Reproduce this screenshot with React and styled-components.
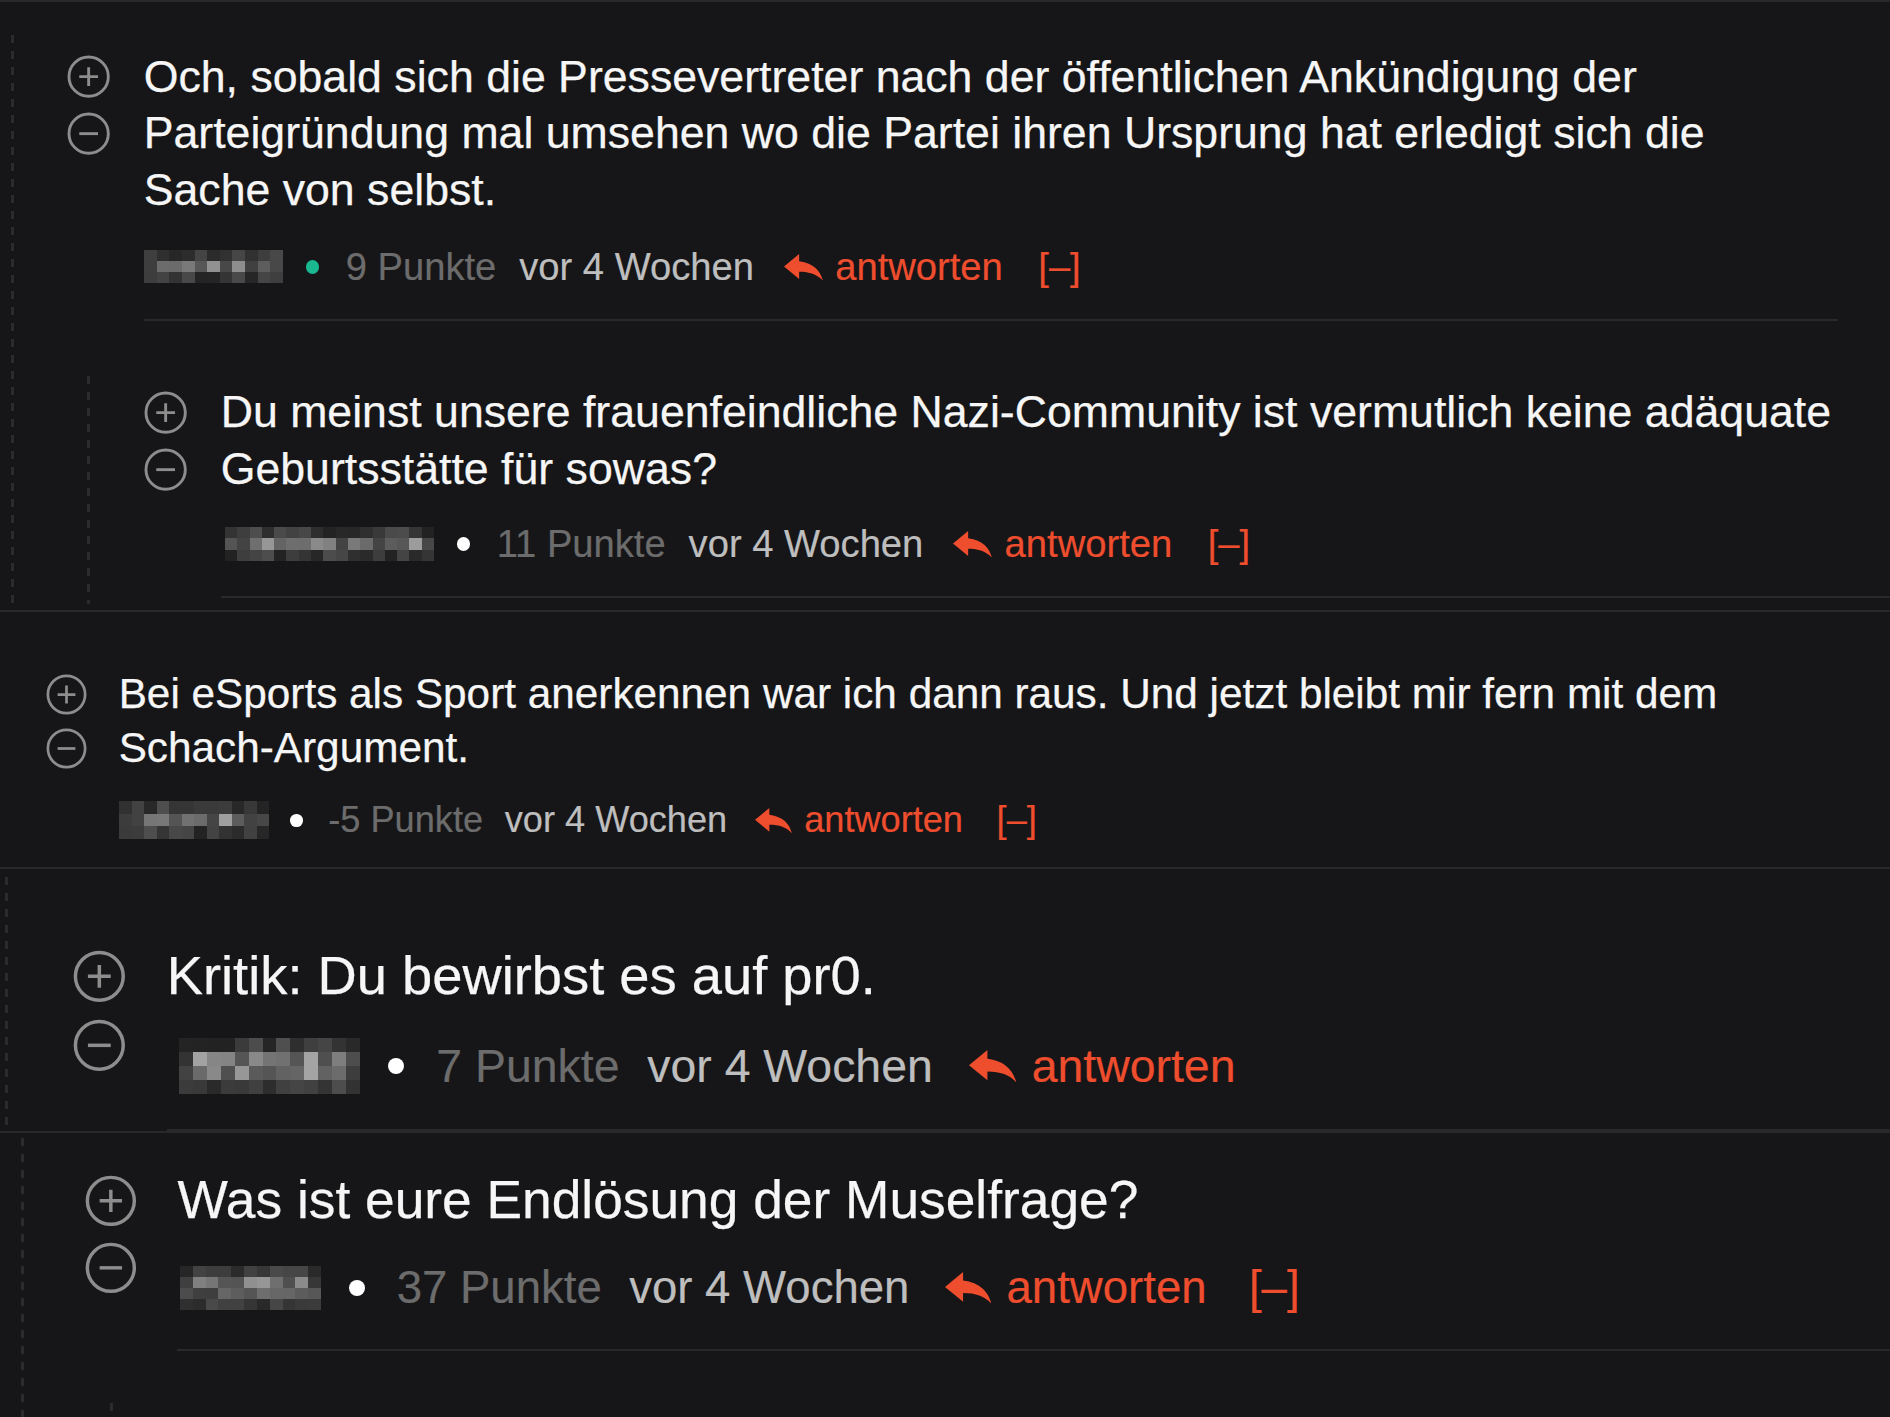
import React from "react";
import styled, { createGlobalStyle } from "styled-components";

const Global = createGlobalStyle`
  html, body { margin: 0; padding: 0; background: #161618; }
  body {
    width: 1890px;
    height: 1417px;
    overflow: hidden;
    font-family: "Liberation Sans", Arial, Helvetica, sans-serif;
    -webkit-font-smoothing: antialiased;
  }
  #root { width: 1890px; height: 1417px; }
`;

const Page = styled.div`
  width: 1890px;
  height: 1417px;
  overflow: hidden;
  background: #161618;
  display: flex;
  flex-direction: column;
`;

const Section = styled.section`
  flex: none;
  font-size: ${(p) => p.$size}px;
  padding-left: ${(p) => p.$pl}px;
  border-top: ${(p) => (p.$top ? "2px solid #29292c" : "none")};
  border-bottom: ${(p) => (p.$bottom ? "2px solid #29292c" : "none")};
`;

const dash = `
  background-image: repeating-linear-gradient(to bottom, #2b2b2e 0 8px, transparent 8px 16px);
  background-size: 3px 100%;
  background-repeat: no-repeat;
  background-position: left top;
`;

const Thread = styled.div`
  margin-top: ${(p) => p.$mt}px;
  margin-left: ${(p) => p.$ml || 0}px;
  padding-top: ${(p) => p.$pt}px;
  padding-bottom: ${(p) => p.$pb || 0}px;
  padding-left: ${(p) => p.$pl}px;
  min-height: ${(p) => (p.$minH ? p.$minH + "px" : "0")};
  ${(p) => (p.$dashed ? dash : "")}
`;

const CommentRow = styled.div`
  display: flex;
  align-items: flex-start;
  gap: 0.76em;
`;

const Votes = styled.div`
  flex: none;
  width: 0.97em;
  display: flex;
  flex-direction: column;
`;

const VoteCell = styled.div`
  height: 1.275em;
  display: flex;
  align-items: center;
  justify-content: center;
`;

const VoteIcon = styled.svg`
  width: 0.97em;
  height: 0.97em;
  display: block;
`;

const Body = styled.div`
  flex: 1;
  min-width: 0;
`;

const Text = styled.p`
  margin: 0;
  color: #f6f6f6;
  line-height: 1.275;
  -webkit-text-stroke: 0.25px #f6f6f6;
  max-width: ${(p) => (p.$max ? p.$max + "px" : "none")};
`;

const Meta = styled.div`
  display: flex;
  align-items: center;
  font-size: 0.855em;
  height: 1.3em;
  margin-top: ${(p) => p.$gap || 0.6}em;
  white-space: nowrap;
  line-height: 1;
  -webkit-text-stroke: 0.2px currentColor;
`;

const UserBlur = styled.svg`
  flex: none;
  display: block;
  margin-left: ${(p) => p.$ml || 0}px;
  margin-right: 0.6em;
`;

const Dot = styled.span`
  flex: none;
  width: 0.35em;
  height: 0.35em;
  border-radius: 50%;
  background: ${(p) => (p.$green ? "#1ab891" : "#ffffff")};
  margin-right: 0.7em;
`;

const Points = styled.span`
  color: #6c6c6c;
  margin-right: 0.6em;
`;

const Time = styled.span`
  color: #bebebe;
  margin-right: 0.78em;
`;

const ReplyIcon = styled.svg`
  flex: none;
  width: 1.02em;
  height: 0.7em;
  display: block;
  margin-right: 0.33em;
`;

const ReplyLink = styled.span`
  color: #ee4d2e;
`;

const Collapse = styled.span`
  color: #ee4d2e;
  margin-left: 0.93em;
`;

const Divider = styled.div`
  height: 2px;
  background: #29292c;
  margin-top: 0.6em;
  margin-right: ${(p) => p.$inset || 0}px;
`;

function seeded(seed) {
  let s = seed;
  return () => {
    s = (s * 9301 + 49297) % 233280;
    return s / 233280;
  };
}

function Mosaic({ w, h, cols, rows, seed, ml }) {
  const r = seeded(seed);
  const cells = [];
  for (let y = 0; y < rows; y++) {
    for (let x = 0; x < cols; x++) {
      const edge = y === 0 || y === rows - 1;
      const sideEdge = x === 0 || x === cols - 1;
      let v;
      if (edge) v = 34 + r() * 45;
      else v = 60 + r() * 105;
      if (sideEdge) v = Math.min(v, 50 + r() * 40);
      v = Math.round(v);
      cells.push(
        <rect key={`${x}-${y}`} x={x} y={y} width={1.02} height={1.02} fill={`rgb(${v},${v},${v + 1})`} />
      );
    }
  }
  return (
    <UserBlur
      $ml={ml}
      width={w}
      height={h}
      viewBox={`0 0 ${cols} ${rows}`}
      preserveAspectRatio="none"
      shapeRendering="crispEdges"
    >
      {cells}
    </UserBlur>
  );
}

function PlusIcon() {
  return (
    <VoteIcon viewBox="0 0 24 24" fill="none" stroke="#8d8d8d" strokeWidth="1.6">
      <circle cx="12" cy="12" r="10.9" />
      <path d="M12 6.8v10.4M6.8 12h10.4" />
    </VoteIcon>
  );
}

function MinusIcon() {
  return (
    <VoteIcon viewBox="0 0 24 24" fill="none" stroke="#8d8d8d" strokeWidth="1.6">
      <circle cx="12" cy="12" r="10.9" />
      <path d="M6.8 12h10.4" />
    </VoteIcon>
  );
}

function Reply() {
  return (
    <ReplyIcon viewBox="3 5 18 15" preserveAspectRatio="none">
      <path fill="#ee4d2e" d="M10 9V5l-7 7 7 7v-4.1c5 0 8.5 1.6 11 5.1-1-5-4-10-11-11z" />
    </ReplyIcon>
  );
}

function Comment({ c }) {
  return (
    <div>
      <CommentRow>
        <Votes>
          <VoteCell>
            <PlusIcon />
          </VoteCell>
          <VoteCell>
            <MinusIcon />
          </VoteCell>
        </Votes>
        <Body>
          <Text $max={c.textMax}>{c.text}</Text>
          <Meta $gap={c.metaGap}>
            <Mosaic {...c.user} />
            <Dot $green={c.green} />
            <Points>{c.points}</Points>
            <Time>vor 4 Wochen</Time>
            <Reply />
            <ReplyLink>antworten</ReplyLink>
            {c.collapse && <Collapse>[–]</Collapse>}
          </Meta>
          {!c.noDivider && <Divider $inset={c.dividerInset} />}
        </Body>
      </CommentRow>
      {c.children && (
        <Thread
          $dashed
          $mt={c.children.mt}
          $ml={c.children.ml}
          $pt={c.children.pt}
          $pb={c.children.pb}
          $pl={c.children.pl}
          $minH={c.children.minH}
        >
          {c.children.comments.map((cc) => (
            <Comment key={cc.id} c={cc} />
          ))}
        </Thread>
      )}
    </div>
  );
}

const sections = [
  {
    id: "s1",
    size: 44.65,
    pl: 10.5,
    top: true,
    bottom: true,
    thread: { mt: 33, pt: 13.5, pb: 6.6, pl: 56, dashed: true },
    comments: [
      {
        id: "c1",
        text:
          "Och, sobald sich die Pressevertreter nach der öffentlichen Ankündigung der Parteigründung mal umsehen wo die Partei ihren Ursprung hat erledigt sich die Sache von selbst.",
        textMax: 1620,
        dividerInset: 52,
        user: { w: 139, h: 33, cols: 11, rows: 3, seed: 11 },
        green: true,
        points: "9 Punkte",
        collapse: true,
        children: {
          mt: 55,
          ml: 20,
          pt: 8.5,
          pb: 6,
          pl: 57,
          comments: [
            {
              id: "c2",
              text:
                "Du meinst unsere frauenfeindliche Nazi-Community ist vermutlich keine adäquate Geburtsstätte für sowas?",
              metaGap: 0.56,
              user: { w: 209, h: 34, cols: 17, rows: 3, seed: 29, ml: 4 },
              points: "11 Punkte",
              collapse: true,
            },
          ],
        },
      },
    ],
  },
  {
    id: "s2",
    size: 42.3,
    pl: 0,
    bottom: true,
    thread: { mt: 0, pt: 55, pb: 23, pl: 45.5, dashed: false },
    comments: [
      {
        id: "c3",
        text:
          "Bei eSports als Sport anerkennen war ich dann raus. Und jetzt bleibt mir fern mit dem Schach-Argument.",
        textMax: 1690,
        user: { w: 150, h: 38, cols: 12, rows: 3, seed: 53 },
        points: "-5 Punkte",
        collapse: true,
        noDivider: true,
      },
    ],
  },
  {
    id: "s3",
    size: 54.3,
    pl: 4.5,
    bottom: true,
    thread: { mt: 8, pt: 64.5, pb: 0, pl: 68.3, dashed: true },
    comments: [
      {
        id: "c4",
        text: "Kritik: Du bewirbst es auf pr0.",
        metaGap: 0.55,
        user: { w: 181, h: 56, cols: 13, rows: 4, seed: 71, ml: 12 },
        points: "7 Punkte",
        collapse: false,
      },
    ],
  },
  {
    id: "s4",
    size: 53.3,
    pl: 20.5,
    thread: { mt: 5, pt: 28.4, pb: 0, pl: 64.8, dashed: true },
    comments: [
      {
        id: "c5",
        text: "Was ist eure Endlösung der Muselfrage?",
        metaGap: 0.52,
        user: { w: 141, h: 44, cols: 11, rows: 4, seed: 97, ml: 3 },
        points: "37 Punkte",
        collapse: true,
        children: { mt: 52, ml: 25.2, pt: 0, pb: 0, pl: 57, minH: 200, comments: [] },
      },
    ],
  },
];

export default function App() {
  return (
    <>
      <Global />
      <Page>
        {sections.map((s) => (
          <Section key={s.id} $size={s.size} $pl={s.pl} $top={s.top} $bottom={s.bottom}>
            <Thread
              $dashed={s.thread.dashed}
              $mt={s.thread.mt}
              $pt={s.thread.pt}
              $pb={s.thread.pb}
              $pl={s.thread.pl}
            >
              {s.comments.map((c) => (
                <Comment key={c.id} c={c} />
              ))}
            </Thread>
          </Section>
        ))}
      </Page>
    </>
  );
}
